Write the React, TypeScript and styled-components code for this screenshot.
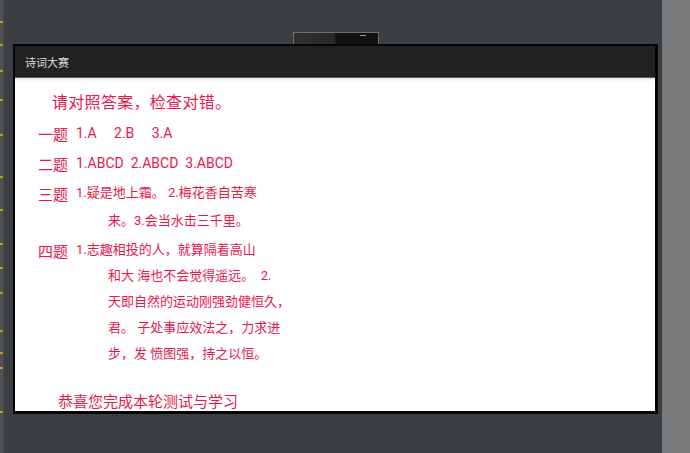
import styled, { createGlobalStyle } from "styled-components";

const GlobalStyle = createGlobalStyle`
  html, body {
    margin: 0;
    padding: 0;
    background: #3c3f42;
    font-family: Roboto, "Noto Sans CJK SC", sans-serif;
  }
`;

const tickRows = [21, 44, 70, 99, 134, 176, 209, 243, 267, 292, 330, 352, 367, 411];

type Row = {
  label: string;
  lead: number;
  size: number;
  lines: string[];
};

const rows: Row[] = [
  {
    label: "一题",
    lead: 26,
    size: 14,
    lines: ["1.A\u00a0\u00a0\u00a0\u00a0\u00a02.B\u00a0\u00a0\u00a0\u00a0\u00a03.A"],
  },
  { label: "二题", lead: 26, size: 14, lines: ["1.ABCD\u00a0\u00a02.ABCD\u00a0\u00a03.ABCD"] },
  { label: "三题", lead: 30, size: 13, lines: ["1.疑是地上霜。\u00a02.梅花香自苦寒", "来。3.会当水击三千里。"] },
  {
    label: "四题",
    lead: 26,
    size: 13,
    lines: [
      "1.志趣相投的人，就算隔着高山",
      "和大\u00a0海也不会觉得遥远。\u00a0\u00a02.",
      "天即自然的运动刚强劲健恒久，",
      "君。\u00a0子处事应效法之，力求进",
      "步，发\u00a0愤图强，持之以恒。",
    ],
  },
];

const App = () => {
  return (
    <>
      <GlobalStyle />
      <Screen>
        <Ruler>
          {tickRows.map((y) => (
            <Tick key={y} style={{ top: y }} />
          ))}
        </Ruler>
        <Desk>
          <TabStub>
            <TabMark />
          </TabStub>
          <Window>
            <TitleBar>诗词大赛</TitleBar>
            <Content>
              <Heading>请对照答案，检查对错。</Heading>
              <RowList>
                {rows.map((row) => (
                  <AnswerRow key={row.label}>
                    <Label>{row.label}</Label>
                    <Answers $lead={row.lead} $size={row.size}>
                      {row.lines.map((line, i) => (
                        <Line key={i} $indent={i > 0}>
                          {line}
                        </Line>
                      ))}
                    </Answers>
                  </AnswerRow>
                ))}
              </RowList>
              <Closing>恭喜您完成本轮测试与学习</Closing>
            </Content>
          </Window>
        </Desk>
        <SideStrip />
      </Screen>
    </>
  );
};

export default App;

const Screen = styled.div`
  display: flex;
  width: 690px;
  height: 453px;
  overflow: hidden;
  background: #3c3f42;
`;

const Ruler = styled.div`
  position: relative;
  width: 3px;
  height: 100%;
  background: #505255;
  border-right: 1px solid #45484b;
`;

const Tick = styled.div`
  position: absolute;
  left: 0;
  width: 3px;
  height: 2px;
  background: #c79a1a;
`;

const Desk = styled.div`
  display: flex;
  flex-direction: column;
  width: 658px;
  padding-left: 9px;
  box-sizing: border-box;
`;

const TabStub = styled.div`
  position: relative;
  margin-top: 32px;
  margin-left: 280px;
  width: 86px;
  height: 12px;
  box-sizing: border-box;
  border: 1px solid #6d6f72;
  border-bottom: none;
  background: linear-gradient(90deg, #2f3133 0%, #26282a 48%, #111214 50%, #101113 100%);
`;

const TabMark = styled.div`
  position: absolute;
  right: 12px;
  top: 2px;
  width: 6px;
  height: 1px;
  background: #9a9c9e;
`;

const Window = styled.div`
  display: flex;
  flex-direction: column;
  width: 645px;
  height: 370px;
  box-sizing: border-box;
  border: 2px solid #050505;
  border-right-width: 3px;
  border-bottom-width: 3px;
  background: #fff;
`;

const TitleBar = styled.div`
  height: 31px;
  flex-shrink: 0;
  display: flex;
  align-items: center;
  padding-left: 10px;
  background: #212121;
  border-bottom: 1px solid #5c5c5c;
  color: #dedede;
  font-size: 11px;
  font-family: "Noto Sans CJK SC", sans-serif;
`;

const Content = styled.div`
  flex: 1;
  display: flex;
  flex-direction: column;
  padding: 14px 0 0 23px;
  background: linear-gradient(180deg, #ececec 0px, #fdfdfd 4px, #ffffff 10px);
  color: #e8174c;
  font-family: Roboto, "Noto Sans CJK SC", sans-serif;
  overflow: hidden;
`;

const Heading = styled.div`
  margin-left: 14px;
  font-size: 16px;
  line-height: 22px;
  letter-spacing: 0.3px;
`;

const RowList = styled.div`
  display: flex;
  flex-direction: column;
  gap: 3px;
  margin-top: 6px;
`;

const AnswerRow = styled.div`
  display: flex;
  align-items: flex-start;
  &:last-child {
    margin-top: -2px;
  }
`;

const Label = styled.div`
  width: 38px;
  flex-shrink: 0;
  font-size: 15px;
  line-height: 27px;
  font-family: "Noto Sans CJK SC", sans-serif;
`;

const Answers = styled.div<{ $lead: number; $size: number }>`
  display: flex;
  flex-direction: column;
  font-size: ${(p) => p.$size}px;
  line-height: ${(p) => p.$lead}px;
  & > div:first-child {
    line-height: 26px;
  }
`;

const Line = styled.div<{ $indent: boolean }>`
  padding-left: ${(p) => (p.$indent ? 32 : 0)}px;
  white-space: nowrap;
`;

const Closing = styled.div`
  margin-top: 25px;
  margin-left: 20px;
  font-size: 15px;
  line-height: 17px;
  font-family: "Noto Sans CJK SC", sans-serif;
`;

const SideStrip = styled.div`
  width: 28px;
  margin-left: 4px;
  height: 100%;
  background: #78797b;
`;
